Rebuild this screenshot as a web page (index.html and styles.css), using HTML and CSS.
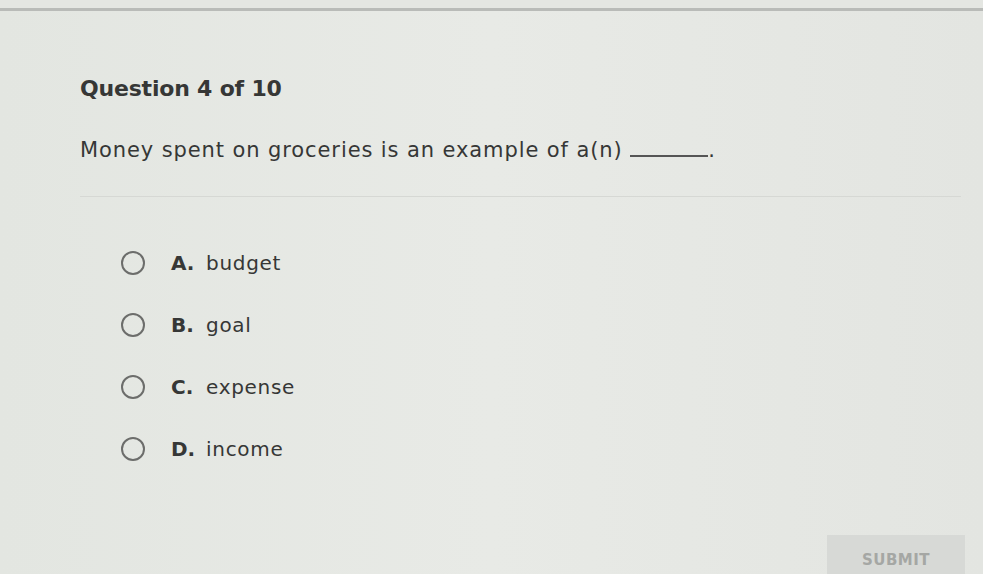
FILE: index.html
```html
<!DOCTYPE html>
<html>
<head>
<meta charset="utf-8">
<link rel="stylesheet" href="styles.css">
</head>
<body>
<div class="topbar"></div>
<main class="quiz">
  <h1 class="qnum">Question 4 of 10</h1>
  <p class="prompt">Money spent on groceries is an example of a(n) <span class="blank"></span>.</p>
  <hr class="divider">
  <ul class="options">
    <li class="option"><span class="radio"></span><span class="letter">A.</span><span class="text">budget</span></li>
    <li class="option"><span class="radio"></span><span class="letter">B.</span><span class="text">goal</span></li>
    <li class="option"><span class="radio"></span><span class="letter">C.</span><span class="text">expense</span></li>
    <li class="option"><span class="radio"></span><span class="letter">D.</span><span class="text">income</span></li>
  </ul>
  <div class="actions"><button class="submit">SUBMIT</button></div>
</main>
</body>
</html>
```
FILE: styles.css
```css
html, body {
  margin: 0;
  padding: 0;
  height: 100%;
  overflow: hidden;
}
body {
  background: linear-gradient(90deg, #e3e6e1 0%, #e8eae6 50%, #e3e5e1 100%);
  font-family: "DejaVu Sans", "Liberation Sans", sans-serif;
  color: #363736;
}
.topbar {
  height: 8px;
  border-bottom: 3px solid #b9bbb8;
  background: #e4e6e2;
}
.quiz {
  padding: 0 22px 0 80px;
}
.qnum {
  margin: 63px 0 0 0;
  font-size: 22px;
  font-weight: bold;
  letter-spacing: -0.2px;
  line-height: 30px;
}
.prompt {
  margin: 33px 0 0 0;
  font-size: 21px;
  letter-spacing: 0.9px;
  line-height: 26px;
}
.blank {
  display: inline-block;
  width: 78px;
  border-bottom: 2px solid #555;
  vertical-align: baseline;
}
.divider {
  margin: 33px 0 0 0;
  border: 0;
  border-top: 1px solid #d6d8d4;
}
.options {
  list-style: none;
  margin: 53px 0 0 41px;
  padding: 0;
  display: flex;
  flex-direction: column;
  gap: 36px;
}
.option {
  display: flex;
  align-items: center;
  font-size: 20px;
  line-height: 26px;
}
.radio {
  width: 24px;
  height: 24px;
  border: 2.5px solid #6c6d6b;
  border-radius: 50%;
  margin-right: 26px;
  box-sizing: border-box;
}
.letter {
  font-weight: bold;
  width: 35px;
}
.text {
  letter-spacing: 0.7px;
}
.actions {
  display: flex;
  justify-content: flex-end;
  margin-top: 73px;
}
.submit {
  width: 138px;
  height: 40px;
  margin-right: -4px;
  background: #d7d9d6;
  border: 0;
  color: #a5a7a4;
  font-family: "DejaVu Sans", "Liberation Sans", sans-serif;
  font-weight: bold;
  font-size: 15px;
  letter-spacing: 0.5px;
  padding: 10px 0 0 0;
  align-self: flex-start;
  line-height: 20px;
}
```
